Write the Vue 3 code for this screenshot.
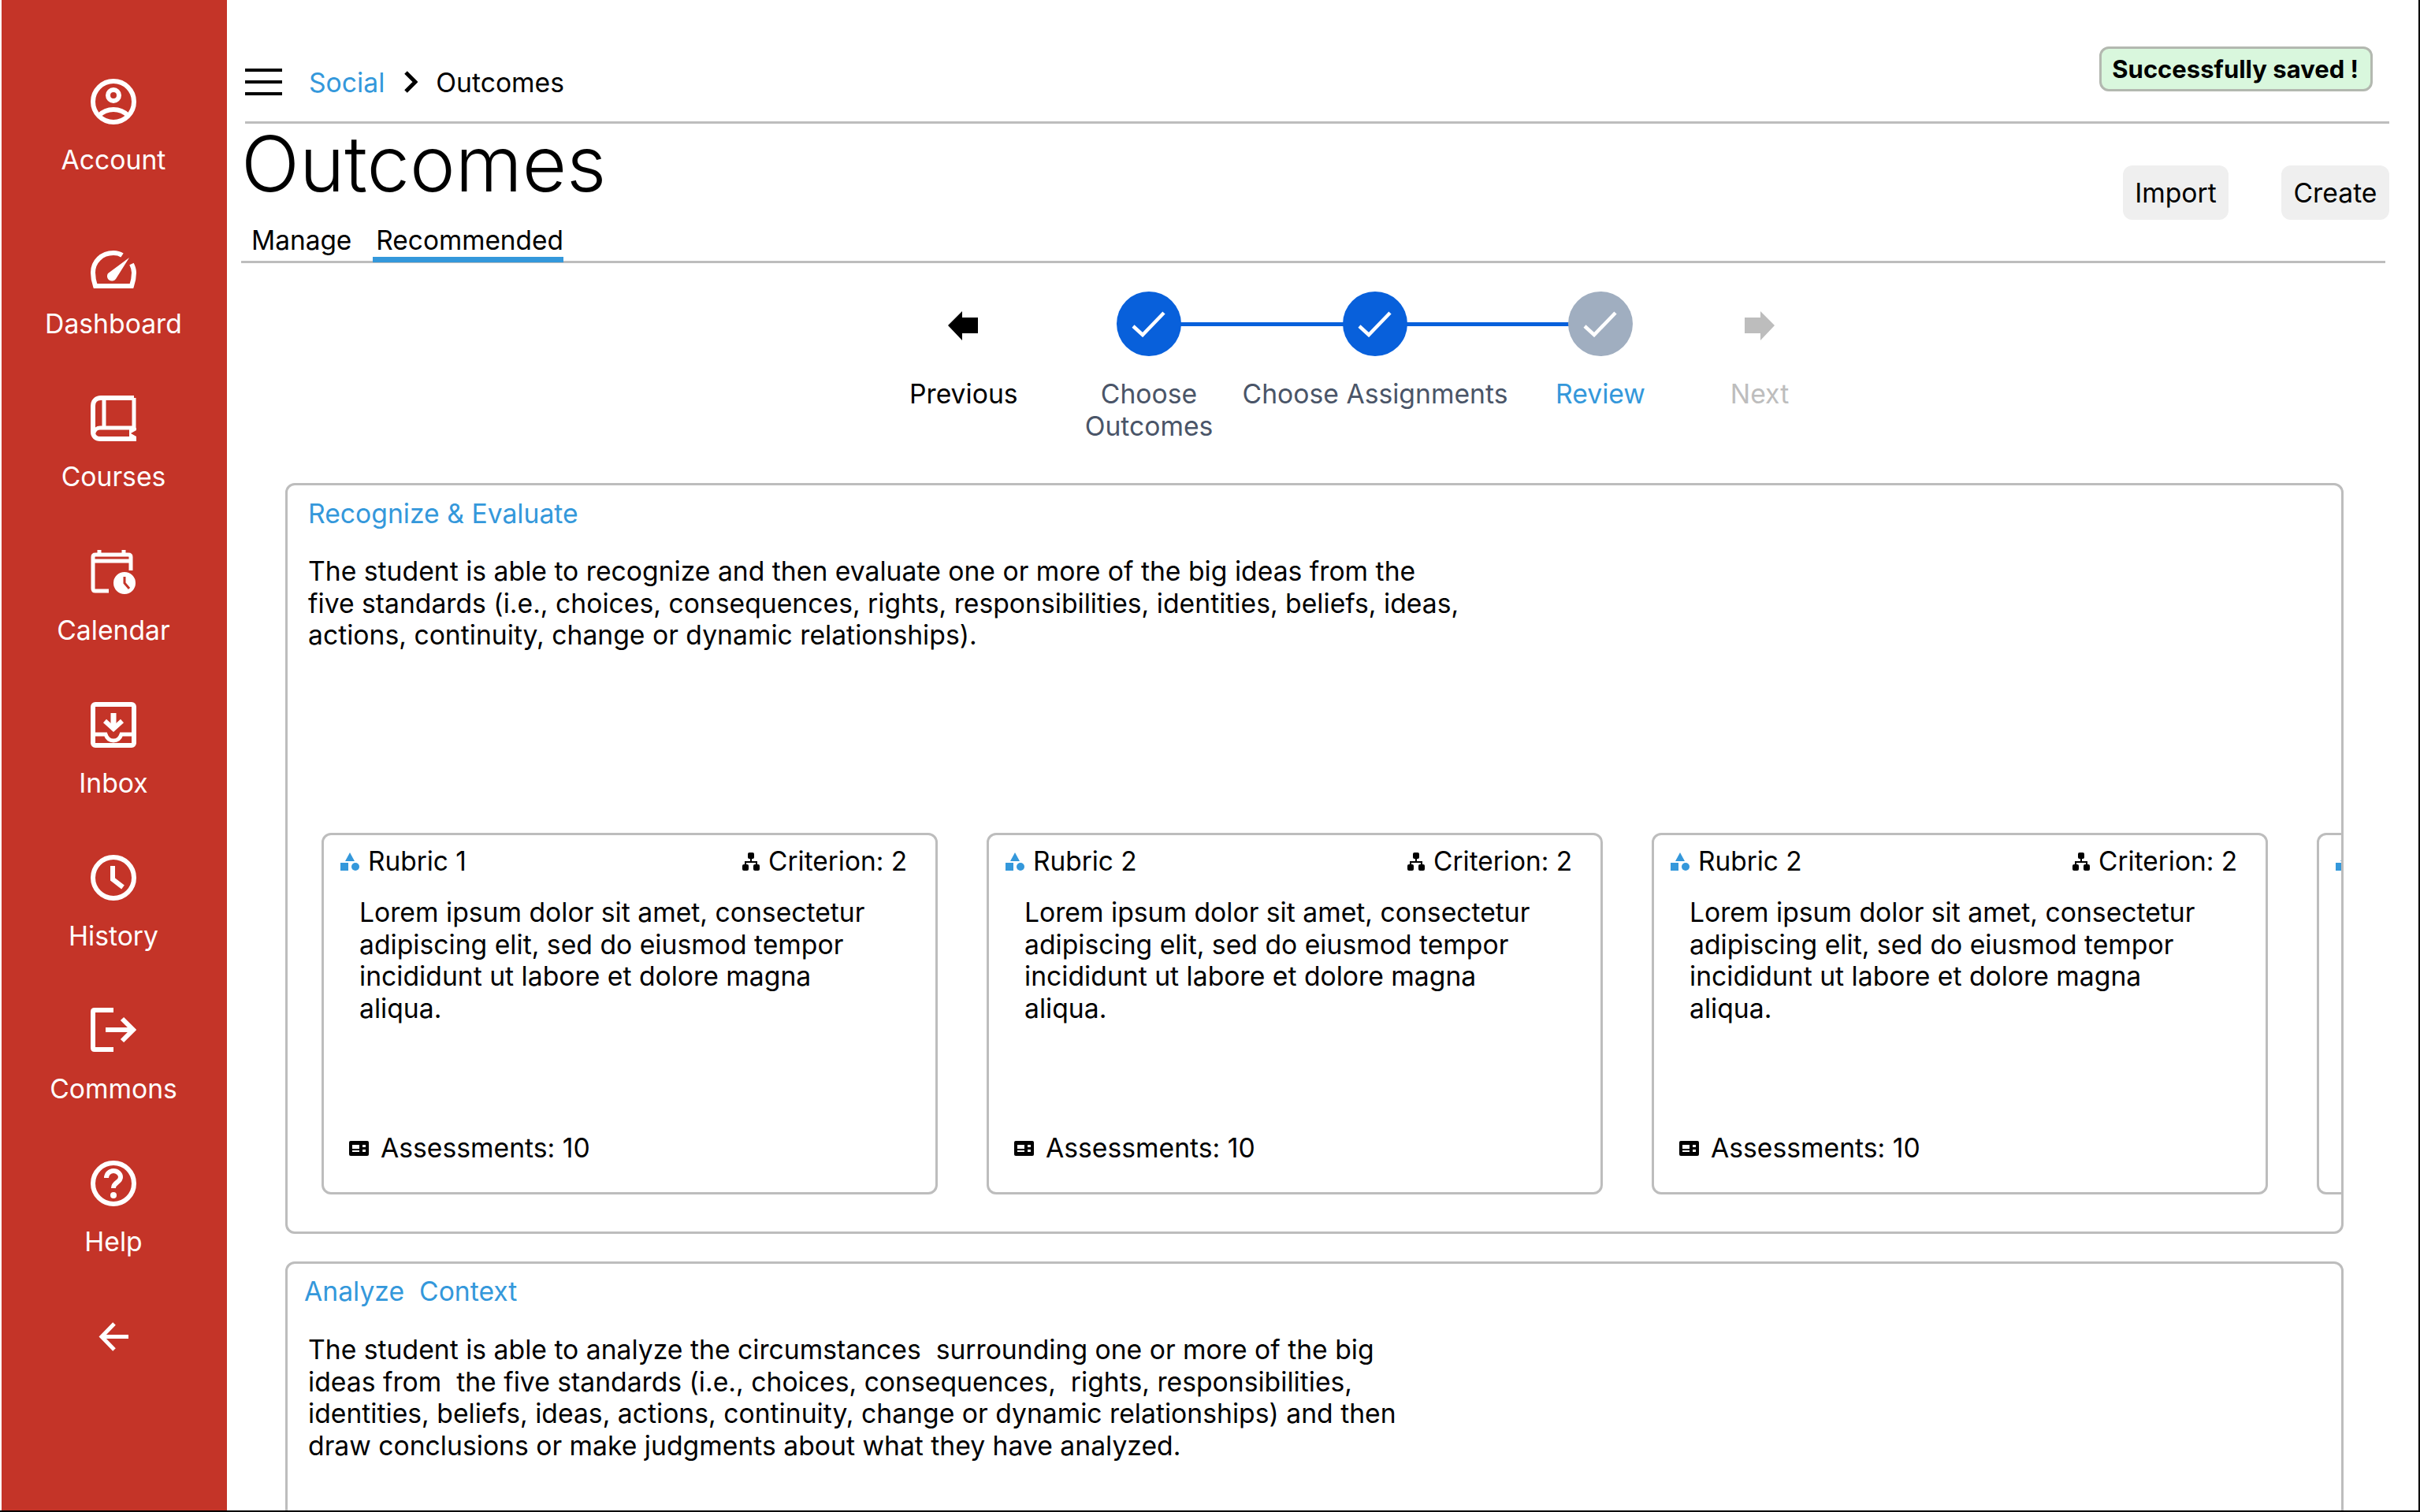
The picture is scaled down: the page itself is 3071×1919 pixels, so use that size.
<template>
  <div class="page">
    <aside class="sidebar">
      <a class="nav-item nav-item--first">
        <svg class="nav-icon" viewBox="0 0 58 58" fill="none" stroke="#fff" stroke-width="6">
          <circle cx="29" cy="29" r="26" />
          <circle cx="29" cy="21" r="7" />
          <path d="M10 47 C16 41 22 39 29 39 C36 39 42 41 48 47" />
        </svg>
        <span>Account</span>
      </a>
      <a class="nav-item">
        <svg class="nav-icon" viewBox="0 0 58 58" fill="none" stroke="#fff" stroke-width="6">
          <path d="M40 16 C37 14 33 13 29 13 C14 13 3 24 3 38 C3 44 4 49 6 55 H52 C54 49 55 44 55 38 C55 34 54 31 52 27" />
          <path d="M49 19 L32 46 A6 6 0 0 1 22 39 Z" fill="#fff" stroke="none" />
        </svg>
        <span>Dashboard</span>
      </a>
      <a class="nav-item">
        <svg class="nav-icon" viewBox="0 0 58 58" fill="none" stroke="#fff" stroke-width="6">
          <path d="M55 3 H13 C7 3 3 7 3 13 V46 C3 52 7 55 12 55 H55" />
          <path d="M17 3 V39 M55 3 V41 H12 C8 41 5 44 4 47" stroke-width="5" />
          <path d="M49 41 L58 41 L58 46 L52 48 L58 51 L58 58 L49 58 Z" fill="#fff" stroke="none" />
          <path d="M51 48 L58 44 L58 52 Z" fill="#C43428" stroke="none" />
        </svg>
        <span>Courses</span>
      </a>
      <a class="nav-item">
        <svg class="nav-icon" viewBox="0 0 58 58" fill="none" stroke="#fff" stroke-width="5">
          <path d="M23 53 H6 C4 53 3 52 3 50 V10 C3 8 4 7 6 7 H48 C50 7 51 8 51 10 V27" />
          <path d="M3 15 H51" />
          <path d="M11 1 V8 M42 1 V8" />
          <circle cx="43" cy="43" r="15" fill="#fff" stroke="#C43428" stroke-width="2" />
          <path d="M43 35 V43 L49 50" stroke="#C43428" stroke-width="3" />
        </svg>
        <span>Calendar</span>
      </a>
      <a class="nav-item">
        <svg class="nav-icon" viewBox="0 0 58 58" fill="none" stroke="#fff" stroke-width="6">
          <rect x="3" y="3" width="52" height="52" rx="3" />
          <path d="M3 41 H19 C21 47 25 49 29 49 C33 49 37 47 39 41 H55" stroke-width="5" />
          <path d="M29 14 V30" stroke-width="7" />
          <path d="M18 24 L29 34 L40 24" />
        </svg>
        <span>Inbox</span>
      </a>
      <a class="nav-item">
        <svg class="nav-icon" viewBox="0 0 58 58" fill="none" stroke="#fff" stroke-width="6">
          <circle cx="29" cy="29" r="26" />
          <path d="M28 14 V31 L41 41" />
        </svg>
        <span>History</span>
      </a>
      <a class="nav-item">
        <svg class="nav-icon" viewBox="0 0 58 58" fill="none" stroke="#fff" stroke-width="6">
          <path d="M29 3 H5 C3.500 3 3 3.500 3 5 V51 C3 52.500 3.500 53 5 53 H29" />
          <path d="M19 28 H52" />
          <path d="M40 14 L54 28 L40 42" />
        </svg>
        <span>Commons</span>
      </a>
      <a class="nav-item">
        <svg class="nav-icon" viewBox="0 0 58 58" fill="none" stroke="#fff" stroke-width="6">
          <circle cx="29" cy="29" r="26" />
          <path d="M20 22 C20 17 24 13 29 13 C34 13 38 17 38 21 C38 28 29 27 29 35" />
          <circle cx="29" cy="44" r="4" fill="#fff" stroke="none" />
        </svg>
        <span>Help</span>
      </a>
      <a class="nav-back">
        <svg width="38" height="37" viewBox="0 0 38 37" fill="none" stroke="#fff" stroke-width="5">
          <path d="M20 2 L4 18.500 L20 35 M4 18.500 H38" />
        </svg>
      </a>
    </aside>

    <main class="main">
      <header class="topbar">
        <div class="crumbs">
          <div class="burger"><i></i><i></i><i></i></div>
          <a class="crumb-link">Social</a>
          <svg class="crumb-sep" width="17" height="28" viewBox="0 0 17 28" fill="none" stroke="#000" stroke-width="5">
            <path d="M2 2 L14 14 L2 26" />
          </svg>
          <span>Outcomes</span>
        </div>
        <div class="toast">Successfully saved !</div>
      </header>

      <div class="heading">
        <div>
          <h1 class="title">Outcomes</h1>
          <nav class="tabs">
            <a class="tab">Manage</a>
            <a class="tab tab--active">Recommended</a>
          </nav>
        </div>
        <div class="actions">
          <button class="btn btn--import">Import</button>
          <button class="btn btn--create">Create</button>
        </div>
      </div>

      <div class="stepper">
        <div class="step step--prev">
          <div class="step-mark">
            <svg class="step-arrow" width="38" height="38" viewBox="0 0 38 38"><path d="M0 18 L18 0 V8 H38 V28 H18 V37 Z" fill="#000" /></svg>
          </div>
          <div class="step-label step-label--nav">Previous</div>
        </div>
        <div
          v-for="s in steps"
          :key="s.label"
          class="step"
          :class="['step--' + s.key]"
        >
          <div class="step-mark">
            <span class="step-dot">
              <svg width="44" height="34" viewBox="0 0 44 34" fill="none" stroke="#fff" stroke-width="4.500">
                <path d="M2 20 L14 31 L41 3" />
              </svg>
            </span>
          </div>
          <div class="step-label">{{ s.label }}</div>
        </div>
        <div class="step step--next">
          <div class="step-mark">
            <svg class="step-arrow" width="38" height="38" viewBox="0 0 38 38"><path d="M38 18 L20 0 V8 H0 V28 H20 V37 Z" fill="#BDBDBD" /></svg>
          </div>
          <div class="step-label step-label--off">Next</div>
        </div>
      </div>

      <section class="outcome">
        <h2 class="outcome-title">{{ outcomes[0].title }}</h2>
        <p class="outcome-text">{{ outcomes[0].text }}</p>
        <div class="cards">
          <article v-for="c in cards" :key="c.id" class="card">
            <div class="card-head">
              <span class="card-name">
                <svg width="24" height="23" viewBox="0 0 24 23" fill="#3498DB">
                  <path d="M12 0 L18 11 H6 Z" />
                  <rect x="0" y="13" width="10" height="10" />
                  <circle cx="19" cy="18" r="5" />
                </svg>
                {{ c.name }}
              </span>
              <span class="card-name">
                <svg width="22" height="23" viewBox="0 0 22 23" fill="#000">
                  <rect x="7" y="0" width="8" height="8" rx="2" />
                  <path d="M11 7 V13 M4 18 V12 H18 V18" fill="none" stroke="#000" stroke-width="2" />
                  <rect x="0" y="15" width="8" height="8" rx="2" />
                  <rect x="14" y="15" width="8" height="8" rx="2" />
                </svg>
                Criterion: 2
              </span>
            </div>
            <p class="card-text">Lorem ipsum dolor sit amet, consectetur adipiscing elit, sed do eiusmod tempor incididunt ut labore et dolore magna aliqua.</p>
            <div class="card-foot">
              <svg width="25" height="19" viewBox="0 0 25 19">
                <rect width="25" height="19" rx="2" fill="#000" />
                <rect x="4" y="5" width="9" height="5" fill="#fff" />
                <rect x="4" y="12" width="9" height="2" fill="#fff" />
                <rect x="17" y="5" width="4" height="3" fill="#fff" />
                <rect x="17" y="11" width="4" height="3" fill="#fff" />
              </svg>
              Assessments: 10
            </div>
          </article>
        </div>
      </section>

      <section class="outcome outcome--second">
        <h2 class="outcome-title">{{ outcomes[1].title }}</h2>
        <p class="outcome-text outcome-text--narrow">{{ outcomes[1].text }}</p>
      </section>
    </main>
  </div>
</template>

<script setup>
const steps = [
  { key: 'outcomes', label: 'Choose Outcomes' },
  { key: 'assignments', label: 'Choose Assignments' },
  { key: 'review', label: 'Review' },
];

const outcomes = [
  {
    title: 'Recognize & Evaluate',
    text: 'The student is able to recognize and then evaluate one or more of the big ideas from the five standards (i.e., choices, consequences, rights, responsibilities, identities, beliefs, ideas, actions, continuity, change or dynamic relationships).',
  },
  {
    title: 'Analyze  Context',
    text: 'The student is able to analyze the circumstances  surrounding one or more of the big ideas from  the five standards (i.e., choices, consequences,  rights, responsibilities, identities, beliefs, ideas, actions, continuity, change or dynamic relationships) and then draw conclusions or make judgments about what they have analyzed.',
  },
];

const cards = [
  { id: 1, name: 'Rubric 1' },
  { id: 2, name: 'Rubric 2' },
  { id: 3, name: 'Rubric 2' },
  { id: 4, name: 'Rubric 2' },
];
</script>

<style>
html, body {
  margin: 0;
  height: 100%;
  overflow: hidden;
  background: #fff;
}
</style>

<style scoped>
.page {
  display: flex;
  width: 3071px;
  height: 1919px;
  box-sizing: border-box;
  padding-left: 2px;
  border-right: 2px solid #000;
  border-bottom: 2px solid #000;
  overflow: hidden;
  font-family: Inter, "Liberation Sans", sans-serif;
  font-size: 33.7px;
  color: #000;
}

.sidebar {
  flex: 0 0 286px;
  display: flex;
  flex-direction: column;
  align-items: center;
  padding: 100px 2px 0 0;
  box-sizing: border-box;
  background: #C43428;
  color: #fff;
}
.nav-item {
  height: 194.2px;
  display: flex;
  flex-direction: column;
  align-items: center;
  flex-shrink: 0;
  line-height: 40px;
}
.nav-item--first {
  margin-bottom: 14px;
}
.nav-icon {
  width: 58px;
  height: 58px;
  margin-bottom: 25px;
}
.nav-back {
  margin-top: 10px;
  height: 37px;
}

.main {
  flex: 1;
  min-width: 0;
}

.topbar {
  display: flex;
  justify-content: space-between;
  align-items: flex-start;
  height: 154px;
  margin: 0 37px 0 23px;
  padding-right: 21px;
  border-bottom: 3px solid #BDBDBD;
}
.crumbs {
  display: flex;
  align-items: center;
  height: 40px;
  margin-top: 84px;
}
.burger {
  display: flex;
  flex-direction: column;
  gap: 11px;
  width: 47px;
  margin-right: 34px;
}
.burger i {
  height: 4px;
  background: #000;
}
.crumb-link {
  color: #3498DB;
}
.crumb-sep {
  margin: 0 23px 0 25px;
}
.toast {
  margin-top: 59px;
  height: 57px;
  box-sizing: border-box;
  padding: 0 15px 0 13px;
  display: flex;
  align-items: center;
  background: #D9F7DD;
  border: 3px solid #B3B8B0;
  border-radius: 12px;
  font-size: 31px;
  font-weight: 700;
}

.heading {
  display: flex;
  justify-content: space-between;
  height: 174px;
  margin: 0 42px 0 18px;
  border-bottom: 3px solid #BDBDBD;
}
.title {
  margin: 0;
  font-size: 97.400px;
  font-weight: 300;
  line-height: 102px;
}
.tabs {
  display: flex;
  margin-top: 24px;
  font-size: 33.400px;
}
.tab {
  height: 50px;
  box-sizing: border-box;
  line-height: 44px;
  padding-left: 13px;
  margin-right: 27px;
}
.tab--active {
  padding-left: 4px;
  margin-right: 0;
  border-bottom: 7px solid #3498DB;
}
.actions {
  display: flex;
  gap: 67px;
  margin-top: 53px;
  margin-right: -5px;
}
.btn {
  height: 69px;
  border: none;
  border-radius: 12px;
  background: #EFEFEF;
  font: inherit;
  color: #000;
  padding: 0;
}
.btn--import {
  width: 134px;
}
.btn--create {
  width: 137px;
}

.stepper {
  display: flex;
  margin-top: 36px;
  padding-left: 866px;
  height: 192px;
}
.step {
  position: relative;
  text-align: center;
  flex-shrink: 0;
}
.step-mark {
  height: 82px;
  margin-bottom: 27px;
  display: flex;
  align-items: center;
  justify-content: center;
}
.step-arrow {
  margin-top: 5px;
}
.step-dot {
  position: relative;
  z-index: 1;
  width: 82px;
  height: 82px;
  border-radius: 50%;
  background: #0860DB;
  display: flex;
  align-items: center;
  justify-content: center;
}
.step-label {
  line-height: 41px;
  color: #4A5568;
}
.step-label--nav {
  color: #000;
}
.step-label--off {
  color: #BDBDBD;
}
.step--prev {
  width: 136px;
  margin-right: 82px;
}
.step--outcomes {
  width: 172px;
  margin-right: 31px;
}
.step--assignments {
  width: 340px;
  margin-right: 58px;
}
.step--review {
  width: 116px;
  margin-right: 104px;
}
.step--next {
  width: 80px;
}
.step--outcomes::after,
.step--assignments::after {
  content: "";
  position: absolute;
  top: 39px;
  left: 50%;
  height: 5px;
  background: #0860DB;
}
.step--outcomes::after {
  width: 287px;
}
.step--assignments::after {
  width: 286px;
}
.step--review .step-dot {
  background: #A0AEC0;
}
.step--review .step-label {
  color: #3498DB;
}

.outcome {
  width: 2612px;
  margin: 51px 0 0 74px;
  box-sizing: border-box;
  padding: 16px 0 47px 26px;
  border: 3px solid #BDBDBD;
  border-radius: 12px;
  overflow: hidden;
}
.outcome--second {
  margin-top: 35px;
  height: 500px;
  padding-top: 15px;
}
.outcome-title {
  margin: 0 0 33px;
  font-size: inherit;
  font-weight: 400;
  line-height: 40px;
  color: #3498DB;
  white-space: pre-wrap;
}
.outcome--second .outcome-title {
  margin: 0 0 34px -5px;
}
.outcome-text {
  margin: 0;
  max-width: 1464px;
  min-height: 352px;
  line-height: 40.6px;
  white-space: pre-wrap;
}
.outcome-text--narrow {
  max-width: 1420px;
}

.cards {
  display: flex;
  gap: 62px;
  margin-left: 17px;
}
.card {
  flex: 0 0 782px;
  height: 459px;
  box-sizing: border-box;
  padding: 13px 36px 36px 21px;
  display: flex;
  flex-direction: column;
  border: 3px solid #BDBDBD;
  border-radius: 12px;
}
.card-head {
  display: flex;
  justify-content: space-between;
  font-size: 33.400px;
  line-height: 40px;
}
.card-name {
  display: flex;
  align-items: center;
  gap: 11px;
}
.card-text {
  margin: 25px 0 0 24px;
  max-width: 660px;
  line-height: 40.6px;
}
.card-foot {
  margin: auto 0 0 11px;
  display: flex;
  align-items: center;
  gap: 15px;
  line-height: 40px;
}
</style>
